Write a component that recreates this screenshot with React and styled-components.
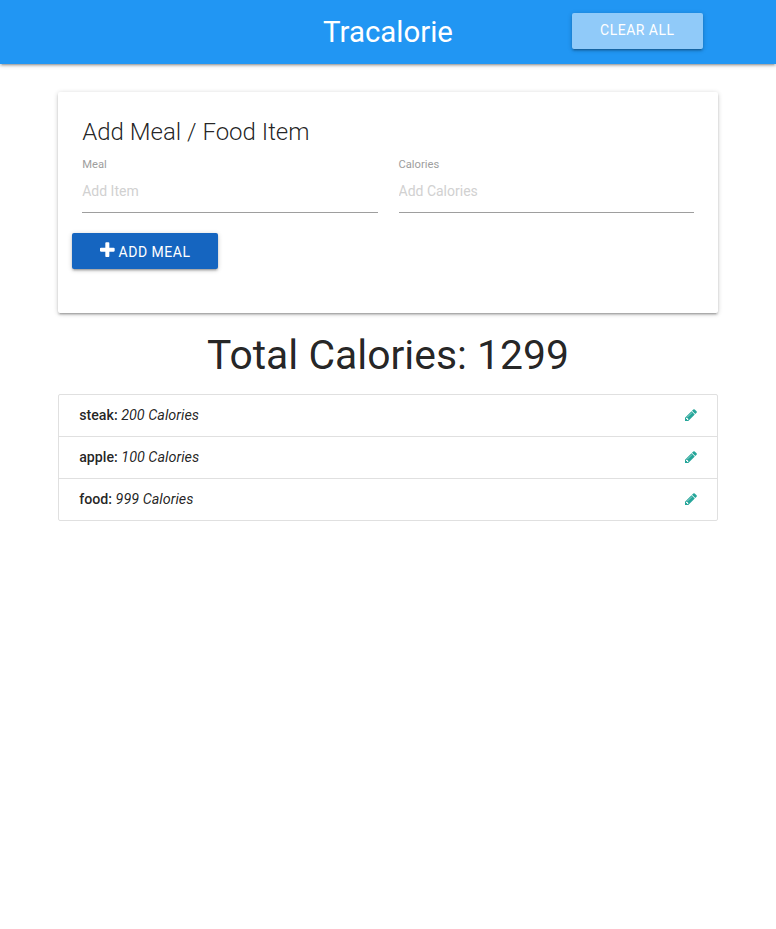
import React from 'react';
import styled, { createGlobalStyle } from 'styled-components';

const GlobalStyle = createGlobalStyle`
  *, *::before, *::after { box-sizing: border-box; }
  body {
    margin: 0;
    background: #fff;
    color: rgba(0, 0, 0, 0.87);
    font-family: Roboto, sans-serif;
    font-size: 14px;
    line-height: 1.5;
  }
`;

const shadow = `0 2px 2px 0 rgba(0,0,0,0.14), 0 3px 1px -2px rgba(0,0,0,0.12), 0 1px 5px 0 rgba(0,0,0,0.2)`;

const Navbar = styled.nav`
  height: 64px;
  background: #2196f3;
  color: #fff;
  box-shadow: ${shadow};
`;

const Container = styled.div`
  width: 85%;
  margin: 0 auto;
`;

const NavContent = styled(Container)`
  display: grid;
  grid-template-columns: 1fr auto 1fr;
`;

const Brand = styled.a`
  grid-column: 2;
  font-size: 29.4px;
  line-height: 64px;
`;

const Button = styled.button`
  height: 36px;
  padding: 0 28px;
  border: 0;
  border-radius: 2px;
  background: ${(p) => p.$background};
  color: #fff;
  font: 400 14px/36px Roboto, sans-serif;
  letter-spacing: 0.5px;
  text-transform: uppercase;
  white-space: nowrap;
  box-shadow: ${shadow};
`;

const ClearButton = styled(Button)`
  width: 131px;
  justify-self: end;
  margin: 13px 15px 0 0;
  padding: 0 0 2px;
  line-height: 34px;
`;

const Card = styled.section`
  height: 221px;
  margin-top: 28px;
  padding: 24px 14px;
  border-radius: 2px;
  background: #fff;
  box-shadow: ${shadow};
`;

const CardTitle = styled.h2`
  margin: 0 10px;
  font-size: 24px;
  font-weight: 300;
  line-height: 32px;
`;

const Fields = styled.form`
  display: grid;
  grid-template-columns: 1fr 1fr;
  column-gap: 21px;
  margin: 8px 10px 20px;
`;

const Field = styled.label`
  display: flex;
  flex-direction: column;
  color: #9e9e9e;
  font-size: 11.2px;
  line-height: 17px;
`;

const Input = styled.input`
  width: 100%;
  height: 40px;
  margin: 0;
  padding: 0 0 3px;
  border: 0;
  border-bottom: 1px solid #9e9e9e;
  outline: 0;
  background: transparent;
  font: 400 14px Roboto, sans-serif;
  &::placeholder { color: #d1d1d1; }
`;

const AddButton = styled(Button)`
  display: flex;
  align-items: center;
  justify-content: center;
  gap: 2px;
  width: 146px;
  padding: 0 2px 0 0;
`;

const ButtonLabel = styled.span`
  padding-top: 3px;
  line-height: 33px;
`;

const Icon = styled.svg`
  flex: none;
  width: ${(p) => p.$size}px;
  height: ${(p) => p.$size}px;
  fill: currentColor;
`;

const PlusIcon = styled(Icon)`
  margin: 0 0 1px;
`;

const Total = styled.h3`
  margin: 19px 0 16px;
  font-size: 40.88px;
  font-weight: 400;
  line-height: 46px;
  text-align: center;
`;

const Collection = styled.ul`
  margin: 0;
  padding: 0;
  border: 1px solid #e0e0e0;
  border-radius: 2px;
  list-style: none;
`;

const Item = styled.li`
  display: flex;
  align-items: center;
  justify-content: space-between;
  height: ${(p) => (p.$last ? 41 : 42)}px;
  padding: 0 19px 0 20px;
  border-bottom: ${(p) => (p.$last ? 0 : '1px solid #e0e0e0')};
  font-size: 14.4px;
  strong { font-size: 14.2px; font-weight: 500; }
  em { font-weight: 400; }
`;

const EditLink = styled.a`
  display: flex;
  padding-bottom: 2px;
  color: #26a69a;
`;

const meals = [
  { name: 'steak', calories: 200 },
  { name: 'apple', calories: 100 },
  { name: 'food', calories: 999 },
];

const Plus = () => (
  <PlusIcon $size={18.67} viewBox="0 0 1792 1792" aria-hidden="true">
    <path d="M1600 736v192q0 40-28 68t-68 28h-416v416q0 40-28 68t-68 28h-192q-40 0-68-28t-28-68v-416h-416q-40 0-68-28t-28-68v-192q0-40 28-68t68-28h416v-416q0-40 28-68t68-28h192q40 0 68 28t28 68v416h416q40 0 68 28t28 68z" />
  </PlusIcon>
);

const Pencil = () => (
  <Icon $size={14} viewBox="0 0 1792 1792" aria-hidden="true">
    <path d="M491 1536l91-91-235-235-91 91v107h128v128h107zm523-928q0-22-22-22-10 0-17 7l-542 542q-7 7-7 17 0 22 22 22 10 0 17-7l542-542q7-7 7-17zm-54-192l416 416-832 832h-416v-416zm683 96q0 53-37 90l-166 166-416-416 166-165q36-38 90-38 53 0 91 38l235 234q37 39 37 91z" />
  </Icon>
);

export default function App() {
  return (
    <>
      <GlobalStyle />
      <Navbar>
        <NavContent>
          <Brand>Tracalorie</Brand>
          <ClearButton $background="#90caf9">Clear All</ClearButton>
        </NavContent>
      </Navbar>
      <Container>
        <Card>
          <CardTitle>Add Meal / Food Item</CardTitle>
          <Fields>
            <Field>Meal<Input placeholder="Add Item" /></Field>
            <Field>Calories<Input placeholder="Add Calories" /></Field>
          </Fields>
          <AddButton $background="#1565c0"><Plus /><ButtonLabel>Add Meal</ButtonLabel></AddButton>
        </Card>
        <Total>Total Calories: 1299</Total>
        <Collection>
          {meals.map((meal, i) => (
            <Item key={meal.name} $last={i === meals.length - 1}>
              <span><strong>{meal.name}: </strong><em>{meal.calories} Calories</em></span>
              <EditLink><Pencil /></EditLink>
            </Item>
          ))}
        </Collection>
      </Container>
    </>
  );
}
